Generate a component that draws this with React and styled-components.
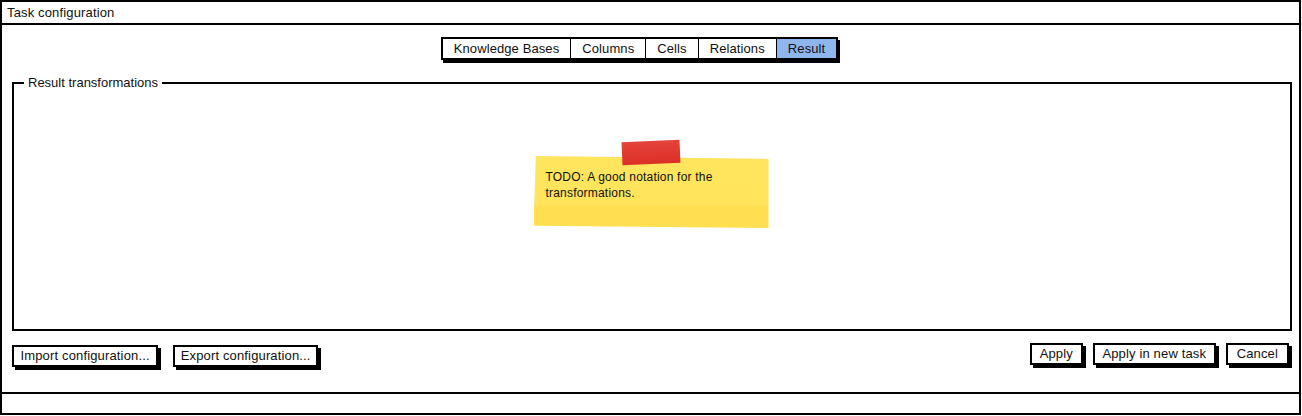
import React from 'react';
import styled, { createGlobalStyle } from 'styled-components';

const GlobalStyle = createGlobalStyle`
  html, body {
    margin: 0;
    padding: 0;
    background: #fff;
    font-family: "Liberation Sans", Arial, sans-serif;
    color: #111;
  }
`;

const Window = styled.div`
  width: 1301px;
  height: 415px;
  box-sizing: border-box;
  border: 2px solid #000;
  display: flex;
  flex-direction: column;
`;

const TitleBar = styled.div`
  height: 21px;
  border-bottom: 2px solid #000;
  padding-left: 5px;
  font-size: 13px;
  line-height: 21px;
  letter-spacing: 0.15px;
  flex: none;
`;

const Body = styled.div`
  flex: 1;
  display: flex;
  flex-direction: column;
  padding: 12px 7px 24px 10px;
  min-height: 0;
`;

const TabRow = styled.div`
  display: flex;
  justify-content: center;
  flex: none;
`;

const TabStrip = styled.div`
  display: flex;
  border: 2px solid #000;
  box-shadow: 2px 3px 0 #000;
  margin-right: 25px;
`;

const Tab = styled.div`
  height: 19px;
  line-height: 19px;
  padding: 0 11px;
  font-size: 13px;
  letter-spacing: 0.1px;
  background: ${(p) => (p.active ? '#8fb6ec' : '#fff')};
  border-left: ${(p) => (p.first ? 'none' : '1.5px solid #000')};
`;

const GroupBox = styled.fieldset`
  flex: 1;
  margin: 15px 0 0 0;
  padding: 0;
  border: 2px solid #000;
  min-height: 0;
  display: flex;
  flex-direction: column;
  align-items: center;
`;

const Legend = styled.legend`
  margin-left: 10px;
  padding: 0 4px;
  font-size: 13px;
  line-height: 15px;
`;

const NoteWrap = styled.div`
  position: relative;
  margin-top: 51px;
  padding-top: 15px;
  margin-right: 2px;
`;

const Tape = styled.div`
  position: absolute;
  z-index: 1;
  top: 0;
  left: 88px;
  width: 58px;
  height: 23px;
  background: linear-gradient(to bottom, #e4433b 0%, #dc3027 100%);
  transform: rotate(-2.5deg);
`;

const Note = styled.div`
  width: 235px;
  height: 72px;
  box-sizing: border-box;
  padding: 13px 12px 0 12px;
  background: linear-gradient(
    to bottom,
    #ffe45f 0%,
    #ffe45b 68%,
    #ffde4f 70%,
    #ffe052 100%
  );
  clip-path: polygon(1% 0, 100% 4%, 100% 100%, 0 97%);
  font-size: 12px;
  line-height: 16px;
  letter-spacing: 0.2px;
  color: #111;
`;

const ButtonRow = styled.div`
  flex: none;
  display: flex;
  justify-content: space-between;
  margin-top: 12px;
  height: 25px;
`;

const ButtonGroup = styled.div`
  display: flex;
  gap: ${(p) => p.gap}px;
  padding-top: ${(p) => p.offset || 0}px;
  padding-right: ${(p) => p.right || 0}px;
`;

const Button = styled.div`
  height: 18px;
  line-height: 18px;
  padding: 0 ${(p) => p.pad || 8}px;
  border: 2px solid #000;
  box-shadow: 3px 3px 0 #000;
  background: #fff;
  font-size: 13px;
  letter-spacing: 0.15px;
  white-space: nowrap;
`;

const StatusBar = styled.div`
  height: 19px;
  border-top: 2px solid #000;
  flex: none;
`;

const tabs = ['Knowledge Bases', 'Columns', 'Cells', 'Relations', 'Result'];

export default function App() {
  return (
    <>
      <GlobalStyle />
      <Window>
        <TitleBar>Task configuration</TitleBar>
        <Body>
          <TabRow>
            <TabStrip>
              {tabs.map((t, i) => (
                <Tab key={t} first={i === 0} active={t === 'Result'}>
                  {t}
                </Tab>
              ))}
            </TabStrip>
          </TabRow>
          <GroupBox>
            <Legend>Result transformations</Legend>
            <NoteWrap>
              <Tape />
              <Note>
                TODO: A good notation for the
                <br />
                transformations.
              </Note>
            </NoteWrap>
          </GroupBox>
          <ButtonRow>
            <ButtonGroup gap={15} offset={2}>
              <Button pad={6.5}>Import configuration...</Button>
              <Button pad={5.5}>Export configuration...</Button>
            </ButtonGroup>
            <ButtonGroup gap={10} right={3}>
              <Button pad={8}>Apply</Button>
              <Button pad={7.5}>Apply in new task</Button>
              <Button pad={9}>Cancel</Button>
            </ButtonGroup>
          </ButtonRow>
        </Body>
        <StatusBar />
      </Window>
    </>
  );
}
